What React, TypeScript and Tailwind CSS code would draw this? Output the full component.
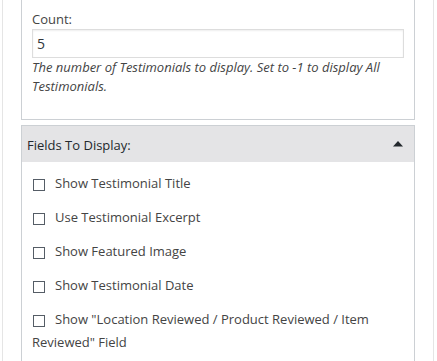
import React from "react";

const fields = [
  "Show Testimonial Title",
  "Use Testimonial Excerpt",
  "Show Featured Image",
  "Show Testimonial Date",
  'Show "Location Reviewed / Product Reviewed / Item Reviewed" Field',
];

const FieldRow: React.FC<{ label: string }> = ({ label }) => (
  <p className="mb-[11px] leading-[23px] text-[#444]">
    <input
      type="checkbox"
      className="appearance-none inline-block align-middle w-[12px] h-[12px] ml-[1px] mr-[10px] border border-[#555d66] bg-white rounded-none"
    />
    {label}
  </p>
);

export default function App() {
  return (
    <div className="w-[437px] h-[361px] overflow-hidden bg-white font-['Open_Sans',sans-serif] text-[13px]">
      <div className="ml-[2px] w-[432px] h-full border-x border-[#e5e5e5] px-[18px]">
        {/* count panel, scrolled so its top is off screen */}
        <div className="border-x border-b border-[#ccd0d4] px-[10px] pt-[10px] pb-[23px]">
          <label className="block leading-[19px] text-[#444]">Count:</label>
          <input
            type="text"
            defaultValue="5"
            className="block w-full h-[29px] px-[4px] border border-[#ddd] shadow-[inset_0_1px_2px_rgba(0,0,0,0.07)] text-[14px] text-[#32373c] outline-none"
          />
          <p className="italic leading-[19px] text-[#444]">
            The number of Testimonials to display. Set to -1 to display All
            Testimonials.
          </p>
        </div>

        {/* fields panel */}
        <div className="mt-[5px] border border-[#ccd0d4]">
          <div className="h-[36px] bg-[#e4e4e6] flex items-center justify-between pl-[5px] pr-[11px] pt-[2px]">
            <span className="leading-[19px] text-[#23282d]">Fields To Display:</span>
            <svg width="10" height="6" viewBox="0 0 10 6" className="mb-[2px]">
              <path d="M5 0 L10 5.5 L0 5.5 Z" fill="#23282d" />
            </svg>
          </div>
          <div className="px-[10px] pt-[10px]">
            {fields.map((f) => (
              <FieldRow key={f} label={f} />
            ))}
          </div>
        </div>
      </div>
    </div>
  );
}
